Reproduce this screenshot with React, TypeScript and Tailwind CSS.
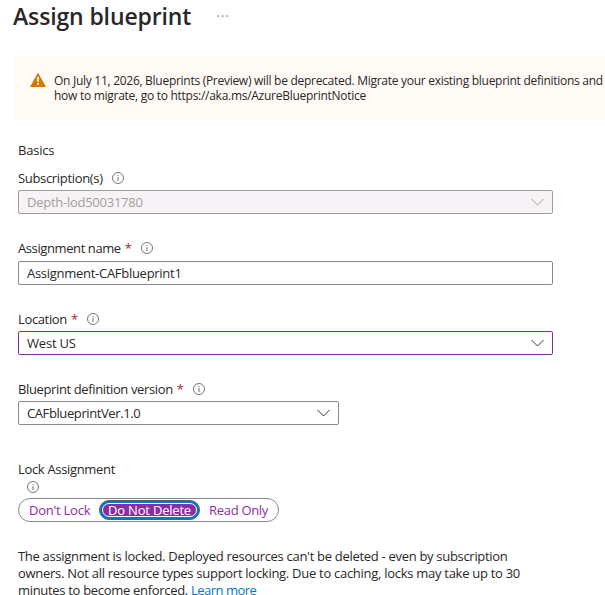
import type { ReactNode } from "react";

function InfoIcon() {
  return (
    <svg width="12" height="12" viewBox="0 0 12 12" fill="none" className="shrink-0">
      <circle cx="6" cy="6" r="5.5" stroke="#605e5c" strokeWidth="0.85" />
      <path d="M6 5v4M6 3v1" stroke="#605e5c" strokeWidth="0.9" />
    </svg>
  );
}

function Chevron({ color }: { color: string }) {
  return (
    <svg width="13" height="8" viewBox="0 0 13 8" fill="none" className="shrink-0">
      <path d="M0.4 0.9 6.5 7 12.6 0.9" stroke={color} strokeWidth="1" />
    </svg>
  );
}

function Label({ text, required }: { text: ReactNode; required?: boolean }) {
  return (
    <div className="flex h-[18px] items-center">
      {text}
      {required && <span className="ml-1 text-[#a4262c]">*</span>}
      <span className="ml-[9px]">
        <InfoIcon />
      </span>
    </div>
  );
}

export default function App() {
  return (
    <div className="h-[595px] w-[605px] overflow-hidden bg-white font-['Open_Sans',sans-serif] text-[13px] leading-[18px] text-[#292827]">
      <header className="flex h-8 items-center pl-[13px]">
        <h1 className="w-[178px] whitespace-nowrap text-[23px] font-semibold leading-8 tracking-[-0.13px]">Assign blueprint</h1>
        <svg width="12" height="2" viewBox="0 0 12 2" className="ml-[26px]" fill="#605e5c">
          <rect x="0.5" y="0.4" width="1.3" height="1.3" />
          <rect x="5" y="0.4" width="1.3" height="1.3" />
          <rect x="9.5" y="0.4" width="1.3" height="1.3" />
        </svg>
      </header>

      <section className="ml-[13px] mt-6 flex h-16 bg-[#fffaf6] pl-[17px] pt-[17px]">
        <svg width="16" height="14" viewBox="0 0 16 14" className="shrink-0">
          <path d="M8 0.6 15.3 13.5H0.7Z" fill="#db7500" stroke="#db7500" strokeLinejoin="round" />
          <path d="M7 4h2l-.35 5h-1.3ZM7.1 10h1.8v1.7H7.1Z" fill="#fff" />
        </svg>
        <p className="ml-2 whitespace-nowrap text-[12px] leading-[15px]">
          <span className="block tracking-[-0.28px]">On July 11, 2026, Blueprints (Preview) will be deprecated. Migrate your existing blueprint definitions and</span>
          <span className="block tracking-[-0.275px]">how to migrate, go to https://aka.ms/AzureBlueprintNotice</span>
        </p>
      </section>

      <main className="pl-[18px]">
        <h2 className="mt-[21px] tracking-[-0.2px]">Basics</h2>

        <div className="mt-[10px]">
          <Label text={<span className="tracking-[-0.33px]">Subscription(s)</span>} />
          <div className="mt-[3px] flex h-6 w-[535px] items-center justify-between rounded-[2px] border border-[#a19f9d] bg-[#f7f2f6] px-2 text-[#a19f9d]">
            <span className="tracking-[-0.26px]">Depth-lod50031780</span>
            <Chevron color="#a19f9d" />
          </div>
        </div>

        <div className="mt-[25px]">
          <Label text={<span className="tracking-[-0.4px]">Assignment name</span>} required />
          <div className="mt-1 flex h-6 w-[535px] items-center rounded-[2px] border border-[#8a8886] px-2">
            <span className="tracking-[-0.28px]">Assignment-CAFblueprint1</span>
          </div>
        </div>

        <div className="mt-[25px]">
          <Label text={<span className="tracking-[-0.36px]">Location</span>} required />
          <div className="mt-[3px] flex h-6 w-[535px] items-center justify-between rounded-[2px] border border-[#8a2da5] px-2">
            <span className="tracking-[-0.2px]">West US</span>
            <Chevron color="#323130" />
          </div>
        </div>

        <div className="mt-[25px]">
          <Label text={<span className="tracking-[-0.37px]">Blueprint definition version</span>} required />
          <div className="mt-[3px] flex h-6 w-[321px] items-center justify-between rounded-[2px] border border-[#8a8886] px-2">
            <span className="tracking-[-0.4px]">CAFblueprintVer.1.0</span>
            <Chevron color="#323130" />
          </div>
        </div>

        <div className="mt-[35px]">
          <div className="tracking-[-0.33px]">Lock Assignment</div>
          <div className="ml-[9px] mt-[3px]">
            <InfoIcon />
          </div>
          <div className="mt-[5px] flex h-6 w-[261px] items-center whitespace-nowrap rounded-full border border-[#8a8886] text-[#8a2da5]">
            <span className="ml-[10px] w-[70px] tracking-[-0.25px]">Don't Lock</span>
            <span className="flex h-5 w-[101px] items-center justify-center rounded-full border border-[#605e5c] bg-[#0078d4] p-[2px]">
              <span className="flex h-full w-full items-center justify-center rounded-full border border-white bg-[#8a2da5] text-white">
                <span className="tracking-[-0.2px]">Do Not Delete</span>
              </span>
            </span>
            <span className="ml-[9px] tracking-[-0.3px]">Read Only</span>
          </div>
        </div>

        <p className="mt-[26px] whitespace-nowrap leading-[17px]">
          <span className="block tracking-[-0.3px]">The assignment is locked. Deployed resources can't be deleted - even by subscription</span>
          <span className="block tracking-[-0.28px]">owners. Not all resource types support locking. Due to caching, locks may take up to 30</span>
          <span className="block tracking-[-0.31px]">
            minutes to become enforced. <a className="tracking-[-0.5px] text-[#0078d4]">Learn more</a>
          </span>
        </p>
      </main>
    </div>
  );
}
